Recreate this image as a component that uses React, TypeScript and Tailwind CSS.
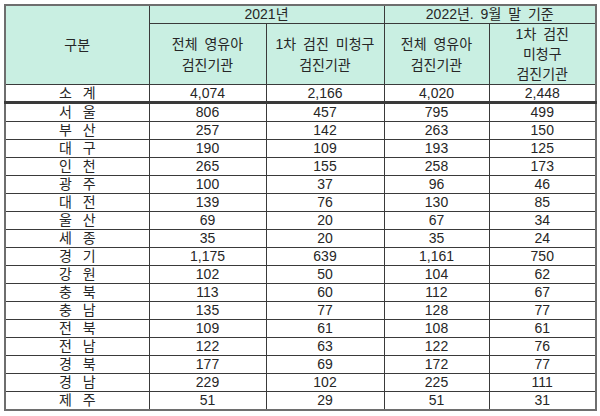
type Row = { name: string; values: string[] }

const rows: Row[] = [
  { name: '서 울', values: ['806', '457', '795', '499'] },
  { name: '부 산', values: ['257', '142', '263', '150'] },
  { name: '대 구', values: ['190', '109', '193', '125'] },
  { name: '인 천', values: ['265', '155', '258', '173'] },
  { name: '광 주', values: ['100', '37', '96', '46'] },
  { name: '대 전', values: ['139', '76', '130', '85'] },
  { name: '울 산', values: ['69', '20', '67', '34'] },
  { name: '세 종', values: ['35', '20', '35', '24'] },
  { name: '경 기', values: ['1,175', '639', '1,161', '750'] },
  { name: '강 원', values: ['102', '50', '104', '62'] },
  { name: '충 북', values: ['113', '60', '112', '67'] },
  { name: '충 남', values: ['135', '77', '128', '77'] },
  { name: '전 북', values: ['109', '61', '108', '61'] },
  { name: '전 남', values: ['122', '63', '122', '76'] },
  { name: '경 북', values: ['177', '69', '172', '77'] },
  { name: '경 남', values: ['229', '102', '225', '111'] },
  { name: '제 주', values: ['51', '29', '51', '31'] },
]

const total = ['4,074', '2,166', '4,020', '2,448']

const cell = 'border border-[#3a3a3a] p-0 text-center align-middle'
const head = `${cell} bg-[#c9efe2] font-normal [word-spacing:3px]`

export default function App() {
  return (
    <div className="w-[600px] h-[416px] bg-white pt-[4px] pl-[4px] font-['Liberation_Sans','Noto_Sans_CJK_KR',sans-serif] text-[14px] text-[#262626]">
      <table className="border-collapse table-fixed w-[591px] border-2 border-[#6e6e6e]">
        <colgroup>
          <col className="w-[144px]" />
          <col className="w-[117px]" />
          <col className="w-[118px]" />
          <col className="w-[105px]" />
          <col className="w-[107px]" />
        </colgroup>
        <thead>
          <tr className="h-[18px]">
            <th rowSpan={2} className={head}>구분</th>
            <th colSpan={2} className={`${head} leading-[17px]`}>2021년</th>
            <th colSpan={2} className={`${head} leading-[17px]`}>2022년. 9월 말 기준</th>
          </tr>
          <tr className="h-[60px]">
            <th className={`${head} leading-[21px] pt-[1px]`}>전체 영유아<br />검진기관</th>
            <th className={`${head} leading-[21px] pt-[1px]`}>1차 검진 미청구<br />검진기관</th>
            <th className={`${head} leading-[21px] pt-[1px]`}>전체 영유아<br />검진기관</th>
            <th className={`${head} leading-[20px]`}>1차 검진<br />미청구<br />검진기관</th>
          </tr>
        </thead>
        <tbody>
          <tr className="h-[17px]">
            <td className={`${cell} border-b-[3px] border-b-double leading-[16px] [word-spacing:7px]`}>소 계</td>
            {total.map((v, i) => (
              <td key={i} className={`${cell} border-b-[3px] border-b-double leading-[16px]`}>{v}</td>
            ))}
          </tr>
          {rows.map(r => (
            <tr key={r.name} className="h-[18px]">
              <td className={`${cell} leading-[17px] [word-spacing:7px]`}>{r.name}</td>
              {r.values.map((v, i) => (
                <td key={i} className={`${cell} leading-[17px]`}>{v}</td>
              ))}
            </tr>
          ))}
        </tbody>
      </table>
    </div>
  )
}
